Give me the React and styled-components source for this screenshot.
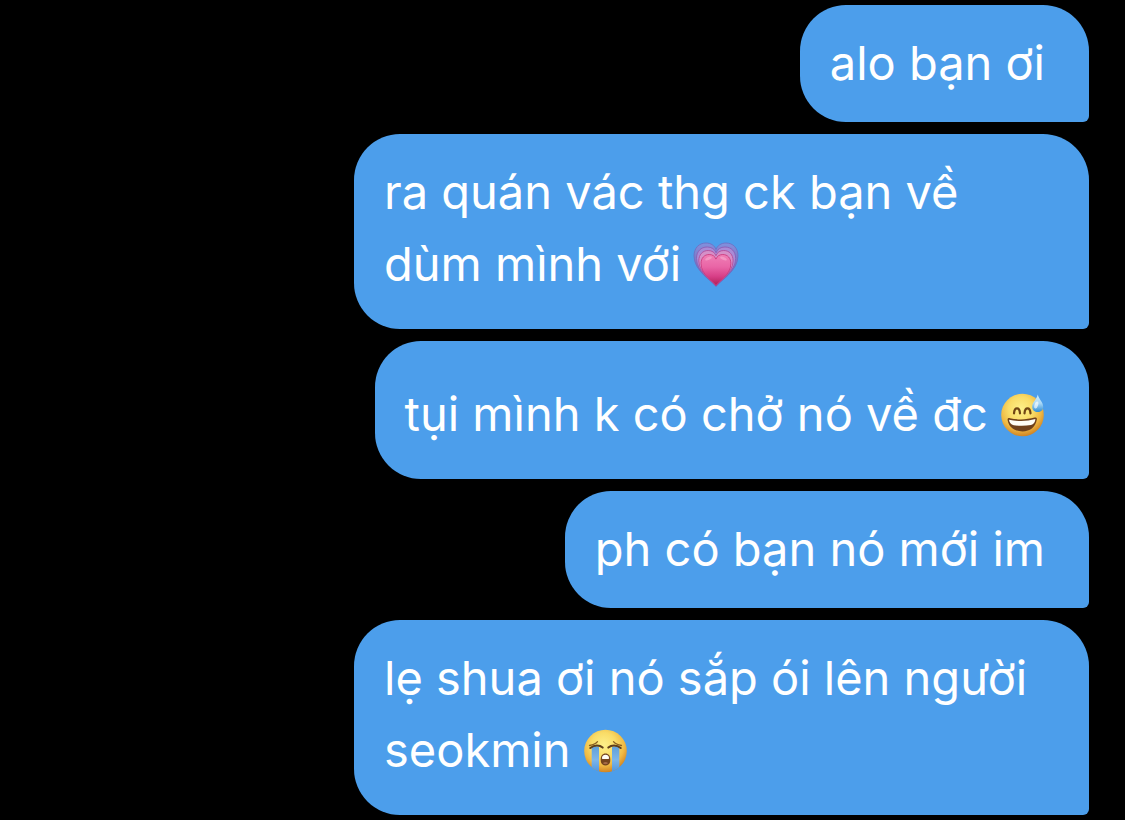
import React from 'react';
import styled, { createGlobalStyle } from 'styled-components';

const GlobalStyle = createGlobalStyle`
  body {
    margin: 0;
    background: #000;
  }
`;

const Thread = styled.ul`
  display: flex;
  flex-direction: column;
  align-items: flex-end;
  gap: 12px;
  margin: 0;
  padding: 5px 36px 5px 39px;
  list-style: none;
`;

const paddings = {
  short: '22px 44px 23px 30px',
  long: '22px 44px 29px 30px',
  tall: '37px 44px 29px 30px',
};

const Bubble = styled.li`
  box-sizing: border-box;
  max-width: 70%;
  padding: ${props => paddings[props.$size]};
  border-radius: 46px 46px 6px 46px;
  background: #4c9eeb;
  color: #fff;
  font-family: Inter, Roboto, sans-serif;
  font-size: 47px;
  line-height: 72px;
`;

const Emoji = styled.svg`
  display: inline-block;
  width: 44px;
  height: 44px;
  vertical-align: -6px;
  overflow: visible;
`;

const heartPath = 'M22 43.500C18 38 0 28 0 13C0 5 5 0 12 0C17 0 20.500 2.500 22 6.500C23.500 2.500 27 0 32 0C39 0 44 5 44 13C44 28 26 38 22 43.500Z';

const GrowingHeart = () => (
  <Emoji viewBox="0 0 44 44" role="img" aria-label="growing heart">
    <defs>
      <linearGradient id="heart-fill" x1="0" y1="0" x2="0" y2="1">
        <stop offset="0" stopColor="#f07fb6" />
        <stop offset="0.4" stopColor="#e965a6" />
        <stop offset="0.7" stopColor="#d84088" />
        <stop offset="1" stopColor="#b01f58" />
      </linearGradient>
      <linearGradient id="heart-outer" x1="0" y1="0" x2="0" y2="1">
        <stop offset="0" stopColor="#8290dd" />
        <stop offset="0.6" stopColor="#7a6dbb" />
        <stop offset="1" stopColor="#9b3a7c" />
      </linearGradient>
    </defs>
    <path d={heartPath} fill="url(#heart-outer)" stroke="#6f6cc0" strokeWidth="0.800" />
    <path d={heartPath} transform="translate(2.500 4) scale(0.89 0.88)" fill="#a98bd6" stroke="#8d5cb4" strokeWidth="1" />
    <path d={heartPath} transform="translate(4.800 7.500) scale(0.78 0.8)" fill="#d590c8" stroke="#b44f9c" strokeWidth="1.200" />
    <path d={heartPath} transform="translate(7 11.500) scale(0.68 0.71)" fill="url(#heart-fill)" stroke="#cb3679" strokeWidth="1.200" />
    <ellipse cx="14.500" cy="15.500" rx="3.500" ry="1.500" fill="#ffd0e4" opacity="0.35" transform="rotate(-24 14.500 15.500)" />
    <ellipse cx="29.500" cy="15.500" rx="3.500" ry="1.500" fill="#ffd0e4" opacity="0.35" transform="rotate(24 29.500 15.500)" />
  </Emoji>
);

const FaceGradient = ({ id }) => (
  <radialGradient id={id} cx="0.46" cy="0.36" r="0.64">
    <stop offset="0" stopColor="#fdf08a" />
    <stop offset="0.45" stopColor="#f9dc67" />
    <stop offset="0.75" stopColor="#f0b943" />
    <stop offset="1" stopColor="#d18424" />
  </radialGradient>
);

const SweatSmile = () => (
  <Emoji viewBox="0 0 44 44" role="img" aria-label="grinning face with sweat">
    <defs>
      <FaceGradient id="sweat-face" />
      <linearGradient id="sweat-drop" x1="0" y1="0" x2="0" y2="1">
        <stop offset="0" stopColor="#d5eefb" />
        <stop offset="0.5" stopColor="#a9d8f6" />
        <stop offset="1" stopColor="#2f8ed6" />
      </linearGradient>
    </defs>
    <circle cx="21.500" cy="22" r="21.300" fill="url(#sweat-face)" />
    <path d="M13 20.300C13.500 13.800 18.500 13.800 19 20.300" fill="none" stroke="#704514" strokeWidth="2.200" strokeLinecap="round" />
    <path d="M23.500 20.300C24 13.800 29 13.800 29.500 20.300" fill="none" stroke="#704514" strokeWidth="2.200" strokeLinecap="round" />
    <path d="M6.700 27.500C6.200 25.600 7.200 24.800 9 25.200C17 27 26 26.700 33.600 24.600C35.300 24.200 36.200 25 35.800 26.800C34.300 34.500 29 38.400 21.500 38.400C14 38.400 8 34.500 6.700 27.500Z" fill="#70411b" />
    <path d="M8 26.700C17 28.600 26 28.400 34.400 26.100C34.200 29.200 32.500 31.500 30 32C24.500 33 18 33 12.700 32.200C10 31.700 8.300 29.500 8 26.700Z" fill="#fffdf5" />
    <path d="M36.800 1.500C37.800 6.500 42.200 9 42.200 13.700C42.200 17 39.800 19 36.800 19C33.800 19 31.200 17 31.200 13.700C31.200 9 35.800 6.500 36.800 1.500Z" fill="url(#sweat-drop)" />
    <ellipse cx="35.300" cy="12" rx="1.800" ry="3.700" fill="#fff" opacity="0.65" transform="rotate(18 35.300 12)" />
  </Emoji>
);

const LoudlyCrying = () => (
  <Emoji viewBox="0 0 44 44" role="img" aria-label="loudly crying face">
    <defs>
      <FaceGradient id="cry-face" />
      <linearGradient id="cry-tears" x1="0" y1="0" x2="0" y2="1">
        <stop offset="0" stopColor="#5f9fd8" />
        <stop offset="0.5" stopColor="#7db6e8" />
        <stop offset="1" stopColor="#4c93e0" />
      </linearGradient>
      <clipPath id="cry-clip">
        <circle cx="21.500" cy="22" r="21.300" />
      </clipPath>
    </defs>
    <circle cx="21.500" cy="22" r="21.300" fill="url(#cry-face)" />
    <g clipPath="url(#cry-clip)">
      <path d="M7.700 18.300C10 17 13 17 15 18.300V44H7.700Z" fill="url(#cry-tears)" />
      <path d="M28 18.300C30 17 33 17 35.300 18.300V44H28Z" fill="url(#cry-tears)" />
    </g>
    <path d="M5.500 16.500C8.500 16 12 14.500 13.500 12.700M37.500 16.500C34.500 16 31 14.500 29.500 12.700" fill="none" stroke="#8b601f" strokeWidth="1.300" strokeLinecap="round" />
    <path d="M6.300 19C10.500 15.500 15.500 15.700 18.700 18.600M36.700 19C32.500 15.500 27.500 15.700 24.300 18.600" fill="none" stroke="#5f3e1b" strokeWidth="2" strokeLinecap="round" />
    <path d="M16.700 30.500C16.700 26.700 18.500 24.500 21.500 24.500C24.500 24.500 26.300 26.700 26.300 30.500C26.300 34.500 24.700 36.500 21.500 36.500C18.300 36.500 16.700 34.500 16.700 30.500Z" fill="#74441e" />
    <path d="M17.900 29C18.200 26.800 19.500 25.700 21.500 25.700C23.500 25.700 24.800 26.800 25.100 29C25.100 29.700 24.600 30 23.900 30H19.100C18.400 30 17.900 29.700 17.900 29Z" fill="#fffdf5" />
    <path d="M19 34C20.200 32.500 22.800 32.500 24 34C23.300 35.600 19.700 35.600 19 34Z" fill="#a56b49" />
  </Emoji>
);

const messages = [
  { text: 'alo bạn ơi', size: 'short' },
  { text: 'ra quán vác thg ck bạn về dùm mình với', size: 'long', emoji: GrowingHeart },
  { text: 'tụi mình k có chở nó về đc', size: 'tall', emoji: SweatSmile },
  { text: 'ph có bạn nó mới im', size: 'short' },
  { text: 'lẹ shua ơi nó sắp ói lên người seokmin', size: 'long', emoji: LoudlyCrying },
];

const App = () => (
  <>
    <GlobalStyle />
    <Thread>
      {messages.map(({ text, size, emoji: Icon }) => (
        <Bubble key={text} $size={size} lang="vi">
          {text}
          {Icon && <> <Icon /></>}
        </Bubble>
      ))}
    </Thread>
  </>
);

export default App;
